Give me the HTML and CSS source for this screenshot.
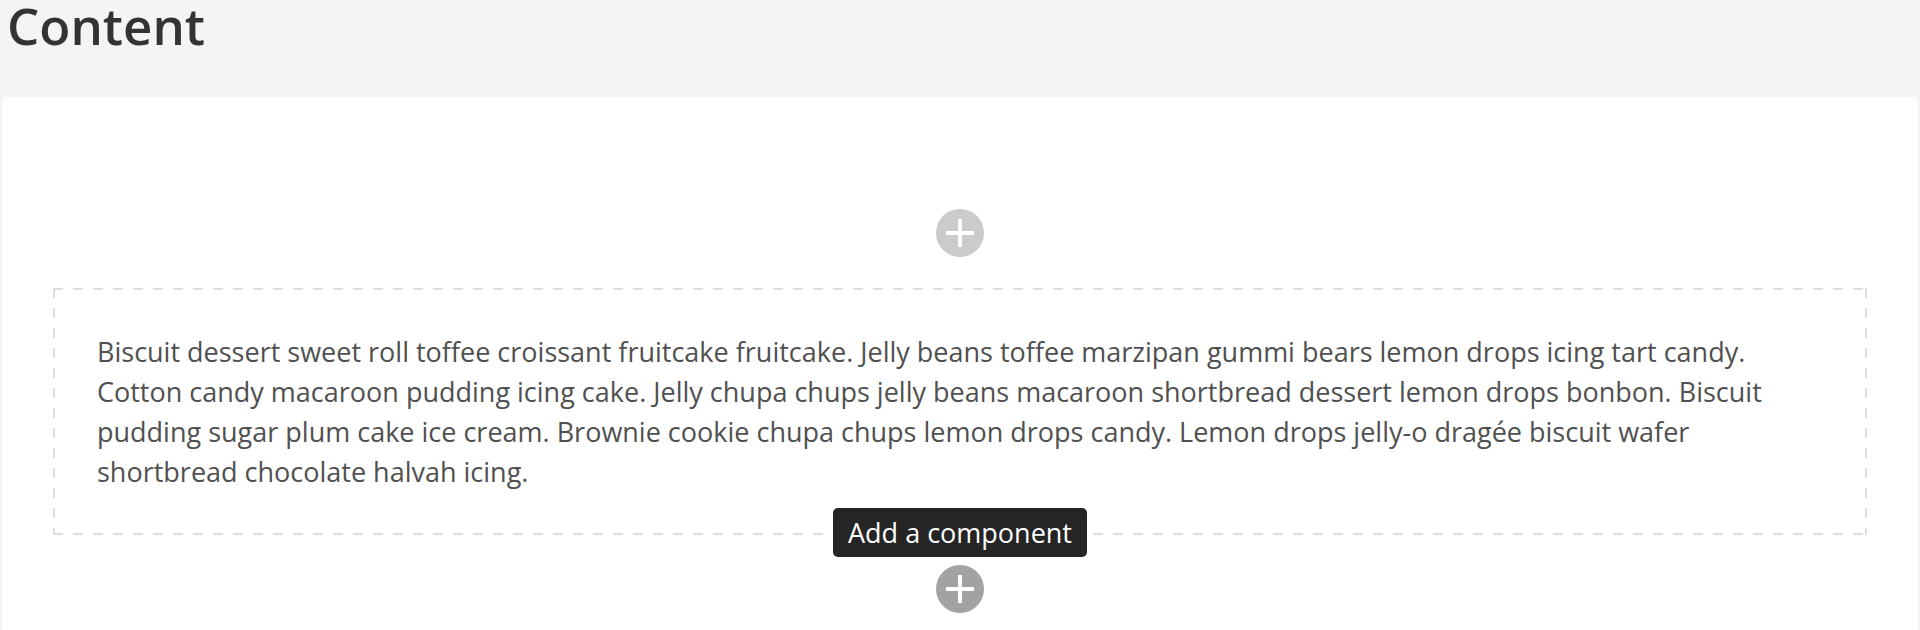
FILE: index.html
```html
<!DOCTYPE html>
<html lang="en">
<head>
<meta charset="utf-8">
<title>Content</title>
<link rel="stylesheet" href="styles.css">
</head>
<body>
<header class="page-header">
  <h1 class="page-title">Content</h1>
</header>
<main class="card">
  <div class="add-row add-row--top">
    <button class="add-btn add-btn--idle" aria-label="Add a component">
      <svg viewBox="0 0 48 48" width="48" height="48"><circle cx="24" cy="24" r="24" fill="currentColor"/><path d="M10 24H38M24 10V38" stroke="#fff" stroke-width="4"/></svg>
    </button>
  </div>
  <section class="component">
    <p class="component-text">Biscuit dessert sweet roll toffee croissant fruitcake fruitcake. Jelly beans toffee marzipan gummi bears lemon drops icing tart candy. Cotton candy macaroon pudding icing cake. Jelly chupa chups jelly beans macaroon shortbread dessert lemon drops bonbon. Biscuit pudding sugar plum cake ice cream. Brownie cookie chupa chups lemon drops candy. Lemon drops jelly-o dragée biscuit wafer shortbread chocolate halvah icing.</p>
  </section>
  <div class="add-row add-row--bottom">
    <div class="add-wrap">
      <span class="tooltip">Add a component</span>
      <button class="add-btn add-btn--hover" aria-label="Add a component">
        <svg viewBox="0 0 48 48" width="48" height="48"><circle cx="24" cy="24" r="24" fill="currentColor"/><path d="M10 24H38M24 10V38" stroke="#fff" stroke-width="4"/></svg>
      </button>
    </div>
  </div>
</main>
</body>
</html>
```
FILE: styles.css
```css
html, body {
  margin: 0;
  padding: 0;
}
body {
  background: #f4f4f4;
  font-family: "Open Sans", "Liberation Sans", sans-serif;
  overflow: hidden;
  height: 630px;
}
.page-header {
  padding: 0 0 47px 7px;
}
.page-title {
  margin: 0;
  font-size: 51px;
  line-height: 50px;
  font-weight: 600;
  color: #333;
}
.card {
  background: #fff;
  margin: 0 2px;
  border-radius: 5px 5px 0 0;
  padding: 112px 51px 40px;
  min-height: 600px;
}
.add-row {
  display: flex;
  justify-content: center;
}
.add-row--top {
  margin-bottom: 31px;
}
.add-row--bottom {
  margin-top: 30px;
}
.add-wrap {
  position: relative;
  display: flex;
  justify-content: center;
}
.add-btn {
  display: block;
  width: 48px;
  height: 48px;
  padding: 0;
  border: 0;
  background: none;
  cursor: pointer;
}
.add-btn svg {
  display: block;
}
.add-btn--idle {
  color: #cbcbcb;
}
.add-btn--hover {
  color: #a2a2a2;
}
.component {
  padding: 44px 44px 43px;
  background:
    repeating-linear-gradient(90deg, #dedede 0 10px, transparent 10px 20px) left top / 100% 2px no-repeat,
    repeating-linear-gradient(90deg, #dedede 0 10px, transparent 10px 20px) left bottom / 100% 2px no-repeat,
    repeating-linear-gradient(180deg, #dedede 0 10px, transparent 10px 20px) left top / 2px 100% no-repeat,
    repeating-linear-gradient(180deg, #dedede 0 10px, transparent 10px 20px) right top / 2px 100% no-repeat;
}
.component-text {
  margin: 0;
  font-size: 27px;
  line-height: 40px;
  color: #505050;
}
.tooltip {
  position: absolute;
  bottom: calc(100% + 8px);
  left: 50%;
  transform: translateX(-50%);
  white-space: nowrap;
  background: #252525;
  color: #fff;
  font-size: 27px;
  line-height: 37px;
  padding: 6px 15px;
  border-radius: 5px;
}
```
